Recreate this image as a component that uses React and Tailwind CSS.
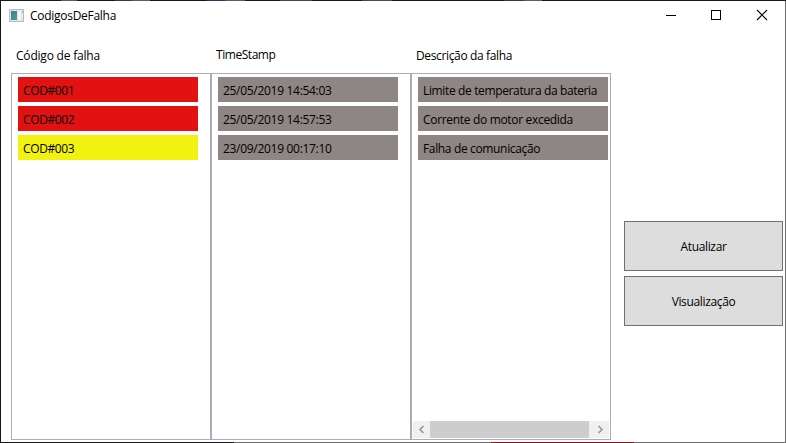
const codes = [
  { text: 'COD#001', color: 'bg-[#e31212]' },
  { text: 'COD#002', color: 'bg-[#e31212]' },
  { text: 'COD#003', color: 'bg-[#f2f210]' },
];
const stamps = ['25/05/2019 14:54:03', '25/05/2019 14:57:53', '23/09/2019 00:17:10'];
const descriptions = [
  { text: 'Limite de temperatura da bateria', tracking: 'tracking-[-0.36px]' },
  { text: 'Corrente do motor excedida', tracking: 'tracking-[-0.32px]' },
  { text: 'Falha de comunicação', tracking: 'tracking-[-0.35px]' },
];

function Column({ title, titleClass = '', children, footer }) {
  return (
    <section className="flex w-[200px] flex-col">
      <h2 className={`h-[27px] pl-[5px] leading-[18px] ${titleClass}`}>{title}</h2>
      <div className="flex h-[367px] flex-col overflow-hidden border border-[#abadb3]">
        <ul className="flex flex-1 flex-col gap-1 pt-[3px] pl-1.5">{children}</ul>
        {footer}
      </div>
    </section>
  );
}

function Row({ text, className }) {
  return (
    <li className={`h-[25px] shrink-0 pl-[5px] leading-[28px] whitespace-nowrap text-black ${className}`}>{text}</li>
  );
}

function ScrollBar() {
  return (
    <div className="mb-px ml-px flex h-[17px] w-[196px] bg-[#f0f0f0]">
      <svg className="h-[17px] w-[17px]" viewBox="0 0 17 17" fill="none" stroke="#999" strokeWidth="1.7">
        <path d="M10.5 5L7 8.5L10.5 12" />
      </svg>
      <div className="h-full w-[159px] bg-[#cdcdcd]" />
      <svg className="ml-[3px] h-[17px] w-[17px]" viewBox="0 0 17 17" fill="none" stroke="#999" strokeWidth="1.7">
        <path d="M6.5 5L10 8.5L6.5 12" />
      </svg>
    </div>
  );
}

function AppIcon() {
  return (
    <svg className="h-[14px] w-4" viewBox="0 0 16 14">
      <defs>
        <linearGradient id="pane" x1="0" y1="0" x2="1" y2="1">
          <stop offset="0" stopColor="#3f74a8" />
          <stop offset="1" stopColor="#4da583" />
        </linearGradient>
      </defs>
      <rect x="0.5" y="0.5" width="14" height="12" fill="#e3e5e7" stroke="#b9bcc0" />
      <rect x="2" y="2" width="6" height="9" fill="url(#pane)" />
      <rect x="9" y="2" width="3" height="9" fill="#f6f7f7" />
      <rect x="13" y="2" width="1" height="2" fill="#8dbbb0" />
    </svg>
  );
}

function TitleBar() {
  return (
    <header className="flex h-[29px] items-center pl-2">
      <AppIcon />
      <h1 className="ml-[5px] flex-1 tracking-[-0.28px] text-black">CodigosDeFalha</h1>
      <svg className="h-[29px] w-[138px]" viewBox="0 0 138 29" fill="none" stroke="#000" shapeRendering="crispEdges">
        <path d="M19 14.5H29" />
        <rect x="64.5" y="9.5" width="9" height="9" />
        <path d="M110 9L120 19M120 9L110 19" shapeRendering="auto" strokeWidth="1.1" />
      </svg>
    </header>
  );
}

function Button({ children }) {
  return (
    <button className="h-[50px] w-[159px] border border-[#707070] bg-[#dddddd] pt-0.5 tracking-[-0.35px] text-black">
      {children}
    </button>
  );
}

export default function App() {
  return (
    <div className="flex h-[443px] w-[786px] flex-col overflow-hidden bg-white font-['Open_Sans','Noto_Sans',sans-serif] text-[12px] text-black">
      <div className="flex h-px shrink-0 bg-[#17181c]">
        <div className="ml-[61px] w-[16px] bg-[#5c5d60]" />
        <div className="ml-[38px] w-[17px] bg-[#2c3b5c]" />
        <div className="w-[18px] bg-[#5c5d60]" />
        <div className="ml-[57px] w-[18px] bg-[#2c3b5c]" />
        <div className="w-[20px] bg-[#5c5d60]" />
        <div className="ml-[35px] w-[32px] bg-[#3c4658]" />
        <div className="ml-[50px] w-[30px] bg-[#4a4b4e]" />
        <div className="ml-[112px] w-[20px] bg-[#2c3b5c]" />
        <div className="w-[18px] bg-[#5c5d60]" />
      </div>
      <div className="flex h-[441px] shrink-0 border-l border-l-[#17181c] border-r border-r-[#6c6c6e]">
        <div className="flex flex-1 flex-col">
          <TitleBar />
          <main className="flex flex-1 pt-4 pl-2.5">
            <Column title="Código de falha" titleClass="pt-px tracking-[-0.2px]">
              {codes.map((c) => <Row key={c.text} text={c.text} className={`w-[180px] tracking-[-0.38px] ${c.color}`} />)}
            </Column>
            <Column title="TimeStamp" titleClass="tracking-[-0.45px]">
              {stamps.map((s) => <Row key={s} text={s} className="w-[180px] bg-[#8e8585] tracking-[-0.3px]" />)}
            </Column>
            <Column title="Descrição da falha" titleClass="pt-px tracking-[-0.36px]" footer={<ScrollBar />}>
              {descriptions.map((d) => <Row key={d.text} text={d.text} className={`w-[190px] bg-[#8e8585] ${d.tracking}`} />)}
            </Column>
            <div className="ml-[13px] flex flex-col gap-[5px] pt-[175px]">
              <Button>Atualizar</Button>
              <Button>Visualização</Button>
            </div>
          </main>
        </div>
      </div>
      <div className="flex h-px shrink-0 bg-[#6c6c6e]">
        <div className="w-[234px] bg-[#17181c]" />
        <div className="ml-[257px] w-[143px] bg-[#7d1a1f]" />
      </div>
    </div>
  );
}
